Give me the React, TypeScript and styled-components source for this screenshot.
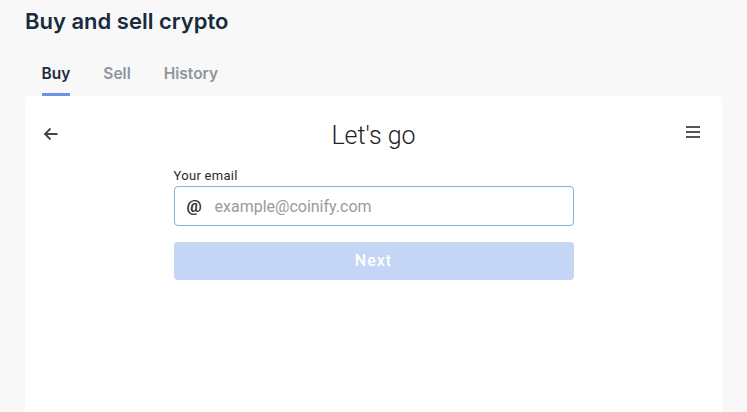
import React, { useState } from "react";
import styled, { createGlobalStyle } from "styled-components";

const GlobalStyle = createGlobalStyle`
  html, body {
    margin: 0;
    padding: 0;
    background: #f8f8f8;
    overflow: hidden;
  }
  * {
    box-sizing: border-box;
  }
`;

const Page = styled.div`
  padding: 0 25px;
  height: 412px;
  display: flex;
  flex-direction: column;
  font-family: Inter, "Noto Sans", sans-serif;
`;

const Title = styled.h1`
  margin: 0;
  padding-top: 8px;
  font-size: 22px;
  line-height: 26px;
  font-weight: 600;
  color: #172b3d;
`;

const Tabs = styled.div`
  display: flex;
  margin-top: 30px;
`;

const Tab = styled.button<{ $active?: boolean }>`
  margin: 0 16.5px;
  padding: 0 0 10px;
  border: none;
  border-bottom: 3px solid ${p => (p.$active ? "#6f92e6" : "transparent")};
  background: none;
  font-family: Inter, "Noto Sans", sans-serif;
  font-size: 15.5px;
  line-height: 19px;
  font-weight: 600;
  color: ${p => (p.$active ? "#1c2c3c" : "#8e959d")};
  cursor: pointer;
`;

const Card = styled.div`
  flex: 1;
  background: #fff;
  border-radius: 4px 4px 0 0;
  padding: 20px 0 0;
  font-family: Roboto, "Noto Sans", sans-serif;
`;

const Header = styled.div`
  display: grid;
  grid-template-columns: 50px 1fr 50px;
  align-items: center;
  padding: 0 20px;
  height: 32px;
`;

const IconButton = styled.button<{ $right?: boolean }>`
  display: flex;
  justify-content: ${p => (p.$right ? "flex-end" : "flex-start")};
  margin: ${p => (p.$right ? "0 2px 0 0" : "0 0 0 -2px")};
  padding: 0;
  border: none;
  background: none;
  color: #444;
  cursor: pointer;
`;

const Heading = styled.h2`
  margin: 4px 0 0;
  text-align: center;
  font-size: 25px;
  font-weight: 300;
  color: #222;
  line-height: 32px;
`;

const Form = styled.form`
  width: 400px;
  margin: 20px auto 0;
`;

const Label = styled.label`
  display: block;
  font-size: 13px;
  line-height: 15px;
  letter-spacing: 0.3px;
  color: #2a2a2a;
  margin-bottom: 3px;
`;

const Field = styled.div`
  display: flex;
  align-items: center;
  height: 40px;
  border: 1px solid #7fb2dd;
  border-radius: 4px;
  padding: 0 12px;
`;

const At = styled.span`
  font-size: 17px;
  font-weight: 700;
  color: #333;
  width: 28px;
`;

const Input = styled.input`
  flex: 1;
  border: none;
  outline: none;
  padding: 0;
  font-family: Roboto, "Noto Sans", sans-serif;
  font-size: 16px;
  color: #333;
  caret-color: #000;
  &::placeholder {
    color: #9a9a9a;
  }
`;

const Button = styled.button`
  display: block;
  width: 100%;
  height: 38px;
  margin-top: 16px;
  border: none;
  border-radius: 4px;
  background: #c4d5f5;
  color: #fff;
  font-family: Roboto, "Noto Sans", sans-serif;
  font-size: 16px;
  font-weight: 500;
  letter-spacing: 1px;
  padding-bottom: 2px;
`;

const App = () => {
  const [tab, setTab] = useState("Buy");
  const [email, setEmail] = useState("");
  return (
    <>
      <GlobalStyle />
      <Page>
        <Title>Buy and sell crypto</Title>
        <Tabs>
          {["Buy", "Sell", "History"].map(t => (
            <Tab key={t} $active={t === tab} onClick={() => setTab(t)}>
              {t}
            </Tab>
          ))}
        </Tabs>
        <Card>
          <Header>
            <IconButton>
              <svg width="16" height="16" viewBox="0 0 16 16" fill="none" stroke="currentColor" strokeWidth="1.8">
                <path d="M14.5 8H2M7.5 2.5L2 8l5.5 5.5" />
              </svg>
            </IconButton>
            <Heading>Let's go</Heading>
            <IconButton $right>
              <svg width="14" height="16" viewBox="0 0 14 16" fill="#555">
                <rect x="0" y="0" width="14" height="2" />
                <rect x="0" y="5" width="14" height="2" />
                <rect x="0" y="10" width="14" height="2" />
              </svg>
            </IconButton>
          </Header>
          <Form onSubmit={e => e.preventDefault()}>
            <Label>Your email</Label>
            <Field>
              <At>@</At>
              <Input
                autoFocus
                placeholder="example@coinify.com"
                value={email}
                onChange={e => setEmail(e.target.value)}
              />
            </Field>
            <Button type="submit" disabled>Next</Button>
          </Form>
        </Card>
      </Page>
    </>
  );
};

export default App;
